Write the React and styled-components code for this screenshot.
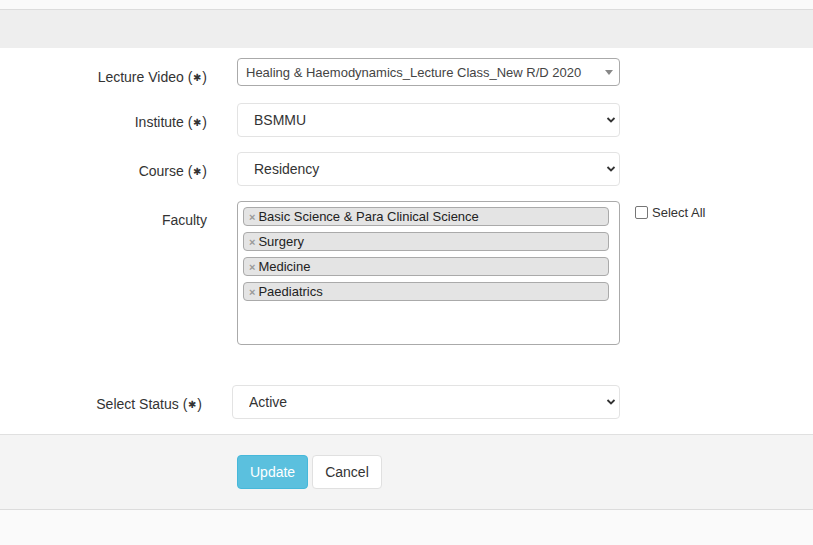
import React from 'react'
import styled, { createGlobalStyle } from 'styled-components'

const Global = createGlobalStyle`
  html, body { margin: 0; padding: 0; background: #fafafa; }
  body { font-family: "Liberation Sans", Arial, sans-serif; color: #333; }
  * { box-sizing: border-box; }
`

const TopStrip = styled.div`
  height: 10px;
  background: #fafafa;
  border-bottom: 1px solid #dcdcdc;
`

const HeaderBand = styled.div`
  height: 38px;
  background: #eeeeee;
`

const FormBody = styled.div`
  background: #fff;
  padding: 10px 0 15px;
`

const Row = styled.div`
  display: grid;
  grid-template-columns: ${p => p.$labelWidth || 207}px ${p => p.$controlWidth || 383}px auto;
  column-gap: 30px;
  align-items: start;
  margin-bottom: ${p => p.$mb ?? 15}px;
`

const Label = styled.label`
  text-align: right;
  font-size: 14px;
  line-height: 20px;
  padding-top: 9px;
  color: #333;
`

const Star = styled.span`
  font-size: 10px;
  vertical-align: 1px;
  margin: 0 1px;
`

const SelectWrap = styled.div`
  position: relative;
  height: ${p => p.$h || 34}px;
`

const NativeSelect = styled.select`
  appearance: none;
  -webkit-appearance: none;
  width: 100%;
  height: 100%;
  border: 1px solid #e3e3e3;
  border-radius: 4px;
  background: #fff;
  padding: 0 30px 0 16px;
  font-family: "Liberation Sans", Arial, sans-serif;
  font-size: 14px;
  color: #333;
  outline: none;
`

const Chevron = styled.svg`
  position: absolute;
  right: 4px;
  top: 50%;
  margin-top: -4px;
  pointer-events: none;
`

const Select2Box = styled.div`
  height: 100%;
  border: 1px solid #aaa;
  border-radius: 4px;
  background: #fff;
  display: flex;
  align-items: center;
  padding: 0 8px;
  font-size: 13px;
  color: #444;
`

const Triangle = styled.span`
  position: absolute;
  right: 7px;
  top: 12px;
  width: 0;
  height: 0;
  border-left: 4px solid transparent;
  border-right: 4px solid transparent;
  border-top: 5px solid #888;
`

const MultiBox = styled.div`
  height: 144px;
  border: 1px solid #aaa;
  border-radius: 4px;
  background: #fff;
  padding: 5px 10px 0 5px;
  display: flex;
  flex-direction: column;
  gap: 6px;
`

const Tag = styled.div`
  height: 19px;
  background: #e4e4e4;
  border: 1px solid #aaa;
  border-radius: 4px;
  display: flex;
  align-items: center;
  padding-left: 5px;
  font-size: 13px;
  color: #222;
`

const Remove = styled.span`
  color: #999;
  font-weight: bold;
  font-size: 11px;
  margin-right: 3px;
`

const CheckLabel = styled.label`
  display: flex;
  align-items: center;
  gap: 4px;
  margin-left: -15px;
  padding-top: 4px;
  font-size: 13px;
  color: #333;
`

const Box = styled.span`
  width: 13px;
  height: 13px;
  border: 1px solid #767676;
  border-radius: 2px;
  background: #fff;
`

const Footer = styled.div`
  background: #f4f4f4;
  border-top: 1px solid #e0e0e0;
  border-bottom: 1px solid #dcdcdc;
  padding: 20px 0 20px 237px;
  display: flex;
  gap: 4px;
`

const Button = styled.button`
  height: 34px;
  padding: 0 12px;
  border-radius: 4px;
  font-family: "Liberation Sans", Arial, sans-serif;
  font-size: 14px;
  border: 1px solid ${p => (p.$primary ? '#46b8da' : '#e0e0e0')};
  background: ${p => (p.$primary ? '#5bc0de' : '#fff')};
  color: ${p => (p.$primary ? '#fff' : '#333')};
`

const Bottom = styled.div`
  height: 40px;
  background: #fafafa;
`

function Required() {
  return <>(<Star>✱</Star>)</>
}

function Select({ value }) {
  return (
    <SelectWrap>
      <NativeSelect defaultValue={value}>
        <option>{value}</option>
      </NativeSelect>
      <Chevron width="10" height="8" viewBox="0 0 10 8">
        <path d="M1.5 2 L5 5.5 L8.5 2" fill="none" stroke="#333" strokeWidth="1.8" />
      </Chevron>
    </SelectWrap>
  )
}

const faculties = ['Basic Science & Para Clinical Science', 'Surgery', 'Medicine', 'Paediatrics']

export default function App() {
  return (
    <>
      <Global />
      <TopStrip />
      <HeaderBand />
      <FormBody>
        <Row>
          <Label>Lecture Video <Required /></Label>
          <SelectWrap $h={28}>
            <Select2Box>Healing &amp; Haemodynamics_Lecture Class_New R/D 2020</Select2Box>
            <Triangle />
          </SelectWrap>
        </Row>
        <Row>
          <Label>Institute <Required /></Label>
          <Select value="BSMMU" />
        </Row>
        <Row>
          <Label>Course <Required /></Label>
          <Select value="Residency" />
        </Row>
        <Row $mb={40}>
          <Label>Faculty</Label>
          <MultiBox>
            {faculties.map(f => (
              <Tag key={f}><Remove>×</Remove>{f}</Tag>
            ))}
          </MultiBox>
          <CheckLabel><Box />Select All</CheckLabel>
        </Row>
        <Row $labelWidth={202} $controlWidth={388} $mb={0}>
          <Label>Select Status <Required /></Label>
          <Select value="Active" />
        </Row>
      </FormBody>
      <Footer>
        <Button $primary>Update</Button>
        <Button>Cancel</Button>
      </Footer>
      <Bottom />
    </>
  )
}
